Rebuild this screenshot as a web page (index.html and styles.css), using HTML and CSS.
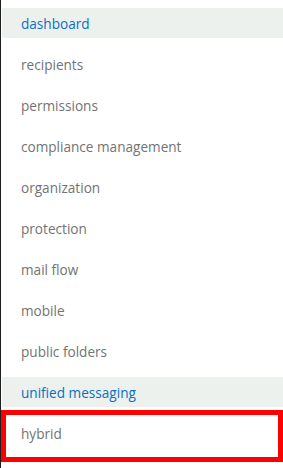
FILE: index.html
```html
<!DOCTYPE html>
<html lang="en">
<head>
  <meta charset="UTF-8" />
  <title>Exchange admin center</title>
  <link rel="stylesheet" href="styles.css">
</head>
<body>
  <div class="nav">
    <a class="nav-item active">dashboard</a>
    <a class="nav-item">recipients</a>
    <a class="nav-item">permissions</a>
    <a class="nav-item">compliance management</a>
    <a class="nav-item">organization</a>
    <a class="nav-item">protection</a>
    <a class="nav-item">mail flow</a>
    <a class="nav-item">mobile</a>
    <a class="nav-item">public folders</a>
    <a class="nav-item active">unified messaging</a>
    <a class="nav-item marked">hybrid</a>
  </div>
</body>
</html>
```

FILE: styles.css
```css
* {
  box-sizing: border-box;
  margin: 0;
  padding: 0;
}
html, body {
  height: 100%;
}
body {
  background: white;
  font-family: 'Open Sans', 'Segoe UI', sans-serif;
}
.nav {
  height: 100%;
  border-left: 1px solid #1e1e1e;
  padding: 8px 0 0 1px;
  display: flex;
  flex-direction: column;
  gap: 11px;
}
.nav-item {
  display: block;
  height: 30px;
  line-height: 31px;
  padding-left: 19px;
  font-size: 13.6px;
  color: #737373;
  position: relative;
}
.nav-item.active {
  background-color: #edf1ee;
  color: #0a6fc2;
}
.nav-item.marked::after {
  content: '';
  position: absolute;
  top: -8px;
  bottom: -14px;
  left: -1px;
  right: 0;
  border: 5px solid red;
}
```
